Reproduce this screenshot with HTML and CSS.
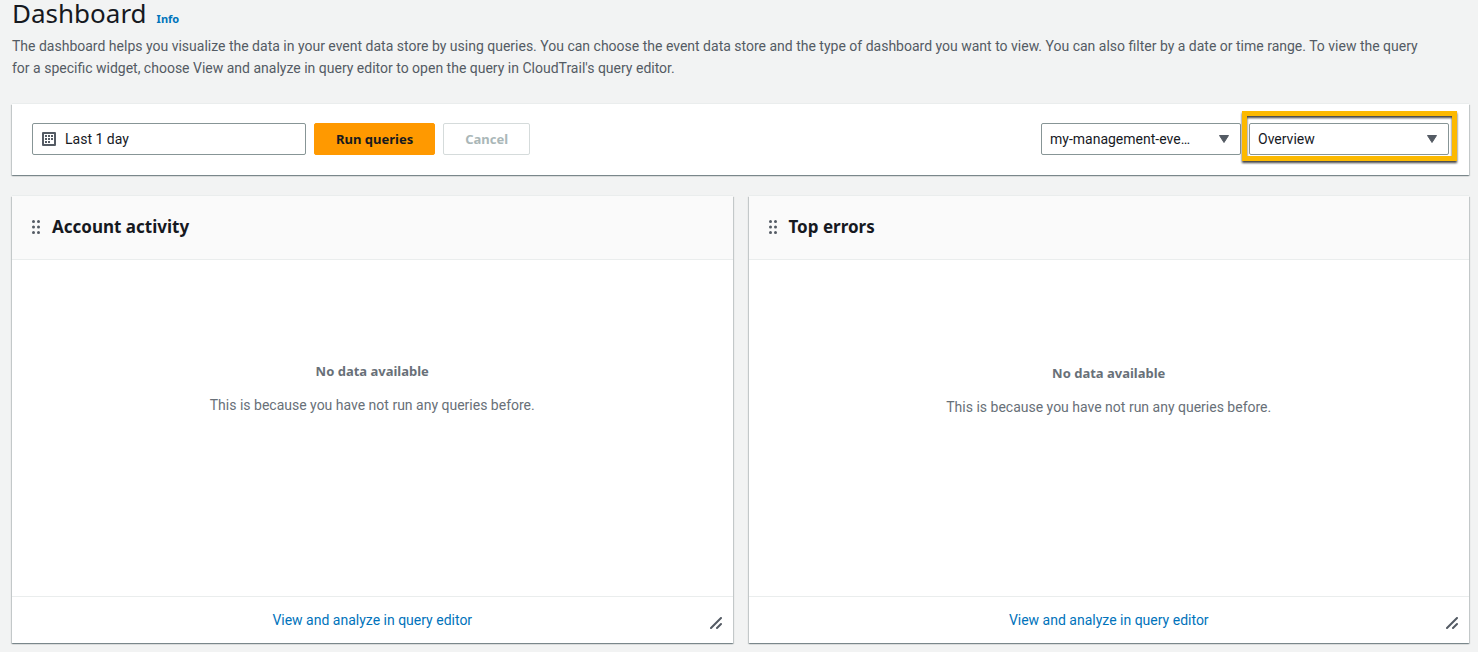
FILE: index.html
```html
<!DOCTYPE html>
<html lang="en">
<head>
<meta charset="utf-8">
<meta name="viewport" content="width=device-width, initial-scale=1">
<title>Dashboard</title>
<link rel="stylesheet" href="styles.css">
</head>
<body>
<main class="page">
  <header class="page-header">
    <div class="title-row">
      <h1 class="title">Dashboard</h1>
      <a class="info" href="#info">Info</a>
    </div>
    <p class="description">The dashboard helps you visualize the data in your event data store by using queries. You can choose the event data store and the type of dashboard you want to view. You can also filter by a date or time range. To view the query for a specific widget, choose View and analyze in query editor to open the query in CloudTrail's query editor.</p>
  </header>

  <section class="toolbar" aria-label="Dashboard controls">
    <div class="toolbar-group">
      <button class="date-range" type="button">
        <svg class="calendar" viewBox="0 0 14 14" width="14" height="14" aria-hidden="true">
          <rect x="1" y="1" width="12" height="12" fill="none" stroke="#545b64" stroke-width="2" stroke-linejoin="round"/>
          <path fill="#545b64" d="M6 3h2v2H6zM9 3h2v2H9zM3 6h2v2H3zM6 6h2v2H6zM9 6h2v2H9zM3 9h2v2H3zM6 9h2v2H6zM3 3h2v2H3z"/>
        </svg>
        <span>Last 1 day</span>
      </button>
      <button class="button primary" type="button">Run queries</button>
      <button class="button" type="button" disabled>Cancel</button>
    </div>
    <div class="toolbar-group">
      <div class="picker">
        <select class="select" aria-label="Event data store"><option>my-management-eve…</option></select>
        <svg class="caret" viewBox="0 0 10 8" width="10" height="8" aria-hidden="true"><path d="M.5.5h9L5 7.500z" fill="#545b64" stroke="#545b64" stroke-linejoin="round"/></svg>
      </div>
      <div class="picker highlighted">
        <select class="select" aria-label="Dashboard type"><option>Overview</option></select>
        <svg class="caret" viewBox="0 0 10 8" width="10" height="8" aria-hidden="true"><path d="M.5.5h9L5 7.500z" fill="#545b64" stroke="#545b64" stroke-linejoin="round"/></svg>
      </div>
    </div>
  </section>

  <div class="widgets">
    <section class="widget">
      <header class="widget-header">
        <svg class="grip" viewBox="0 0 8 14" width="8" height="14" aria-hidden="true"><g fill="#545b64"><circle cx="1.500" cy="1.500" r="1.500"/><circle cx="6.500" cy="1.500" r="1.500"/><circle cx="1.500" cy="7" r="1.500"/><circle cx="6.500" cy="7" r="1.500"/><circle cx="1.500" cy="12.500" r="1.500"/><circle cx="6.500" cy="12.500" r="1.500"/></g></svg>
        <h2 class="widget-title">Account activity</h2>
      </header>
      <div class="widget-body">
        <p class="empty-title">No data available</p>
        <p class="empty-text">This is because you have not run any queries before.</p>
      </div>
      <footer class="widget-footer">
        <a class="link" href="#account-activity">View and analyze in query editor</a>
        <svg class="resize" viewBox="0 0 12 12" width="12" height="12" aria-hidden="true"><path d="M1 11 11 1M7 11l4-4" fill="none" stroke="#545b64" stroke-width="2" stroke-linecap="round"/></svg>
      </footer>
    </section>
    <section class="widget">
      <header class="widget-header">
        <svg class="grip" viewBox="0 0 8 14" width="8" height="14" aria-hidden="true"><g fill="#545b64"><circle cx="1.500" cy="1.500" r="1.500"/><circle cx="6.500" cy="1.500" r="1.500"/><circle cx="1.500" cy="7" r="1.500"/><circle cx="6.500" cy="7" r="1.500"/><circle cx="1.500" cy="12.500" r="1.500"/><circle cx="6.500" cy="12.500" r="1.500"/></g></svg>
        <h2 class="widget-title">Top errors</h2>
      </header>
      <div class="widget-body">
        <p class="empty-title">No data available</p>
        <p class="empty-text">This is because you have not run any queries before.</p>
      </div>
      <footer class="widget-footer">
        <a class="link" href="#top-errors">View and analyze in query editor</a>
        <svg class="resize" viewBox="0 0 12 12" width="12" height="12" aria-hidden="true"><path d="M1 11 11 1M7 11l4-4" fill="none" stroke="#545b64" stroke-width="2" stroke-linecap="round"/></svg>
      </footer>
    </section>
  </div>
</main>
</body>
</html>
```
FILE: styles.css
```css
* { box-sizing: border-box; }

body {
  margin: 0;
  background: #f2f3f3;
  color: #16191f;
  font: 14px/22px Roboto, "Noto Sans", sans-serif;
}

h1, h2, p { margin: 0; }
a { text-decoration: none; color: #0073bb; }
button, select { font: inherit; color: inherit; }

.page { padding: 0 9px 9px 12px; }

.title-row {
  display: flex;
  align-items: baseline;
  gap: 10px;
  font-family: "Noto Sans", sans-serif;
}
.title { font-size: 26px; line-height: 26px; font-weight: 400; }
.info { font-size: 11px; line-height: 16px; font-weight: 700; }
.description {
  margin-top: 8px;
  padding-right: 40px;
  color: #545b64;
}

.toolbar,
.widget {
  background: #fff;
  box-shadow: 0 1px 1px 0 rgba(0, 28, 36, .3), 1px 1px 1px 0 rgba(0, 28, 36, .15), -1px 1px 1px 0 rgba(0, 28, 36, .15), 0 -1px 0 0 #eaeded;
}

.toolbar {
  display: flex;
  flex-wrap: wrap;
  justify-content: space-between;
  gap: 8px;
  margin-top: 25px;
  padding: 19px 20px 20px;
}
.toolbar-group { display: flex; gap: 8px; }

.date-range {
  display: flex;
  align-items: center;
  gap: 9px;
  width: 274px;
  height: 32px;
  padding: 0 9px;
  background: #fff;
  border: 1px solid #879596;
  border-radius: 2px;
}
.button {
  height: 32px;
  padding: 0 21px;
  border: 1px solid #ff9900;
  border-radius: 2px;
  font: 700 13px/22px "Noto Sans", sans-serif;
}
.primary { background: #ff9900; }
.button:disabled {
  background: #fff;
  border-color: #d5dbdb;
  color: #aab7b8;
}

.picker { position: relative; width: 200px; }
.select {
  appearance: none;
  width: 100%;
  height: 32px;
  padding: 0 28px 0 8px;
  background: #fff;
  border: 1px solid #879596;
  border-radius: 2px;
}
.caret {
  position: absolute;
  top: 12px;
  right: 12px;
  pointer-events: none;
}
.highlighted::after {
  content: "";
  position: absolute;
  inset: -12px -8px -6px -7px;
  border: 5px solid #fcb900;
  filter: drop-shadow(0 2px 1px rgba(0, 0, 0, .75));
  pointer-events: none;
}

.widgets {
  display: grid;
  grid-template-columns: 1fr 1fr;
  gap: 16px;
  margin-top: 21px;
}
.widget { display: flex; flex-direction: column; }
.widget-header {
  display: flex;
  align-items: center;
  gap: 12px;
  padding: 20px 20px 21px;
  background: #fafafa;
  border-bottom: 1px solid #eaeded;
}
.widget-title { font: 700 17px/22px "Noto Sans", sans-serif; }
.widget-body {
  display: flex;
  flex-direction: column;
  gap: 12px;
  min-height: 336px;
  padding: 100px 20px;
  text-align: center;
  color: #687078;
}
.widget + .widget .widget-body { padding-top: 102px; }
.empty-title { font: 700 13px/22px "Noto Sans", sans-serif; }
.widget-footer {
  display: grid;
  grid-template-columns: 1fr auto 1fr;
  align-items: center;
  padding: 12px 11px;
  border-top: 1px solid #eaeded;
}
.link { grid-column: 2; }
.resize { justify-self: end; align-self: end; margin-bottom: 2px; }
```
